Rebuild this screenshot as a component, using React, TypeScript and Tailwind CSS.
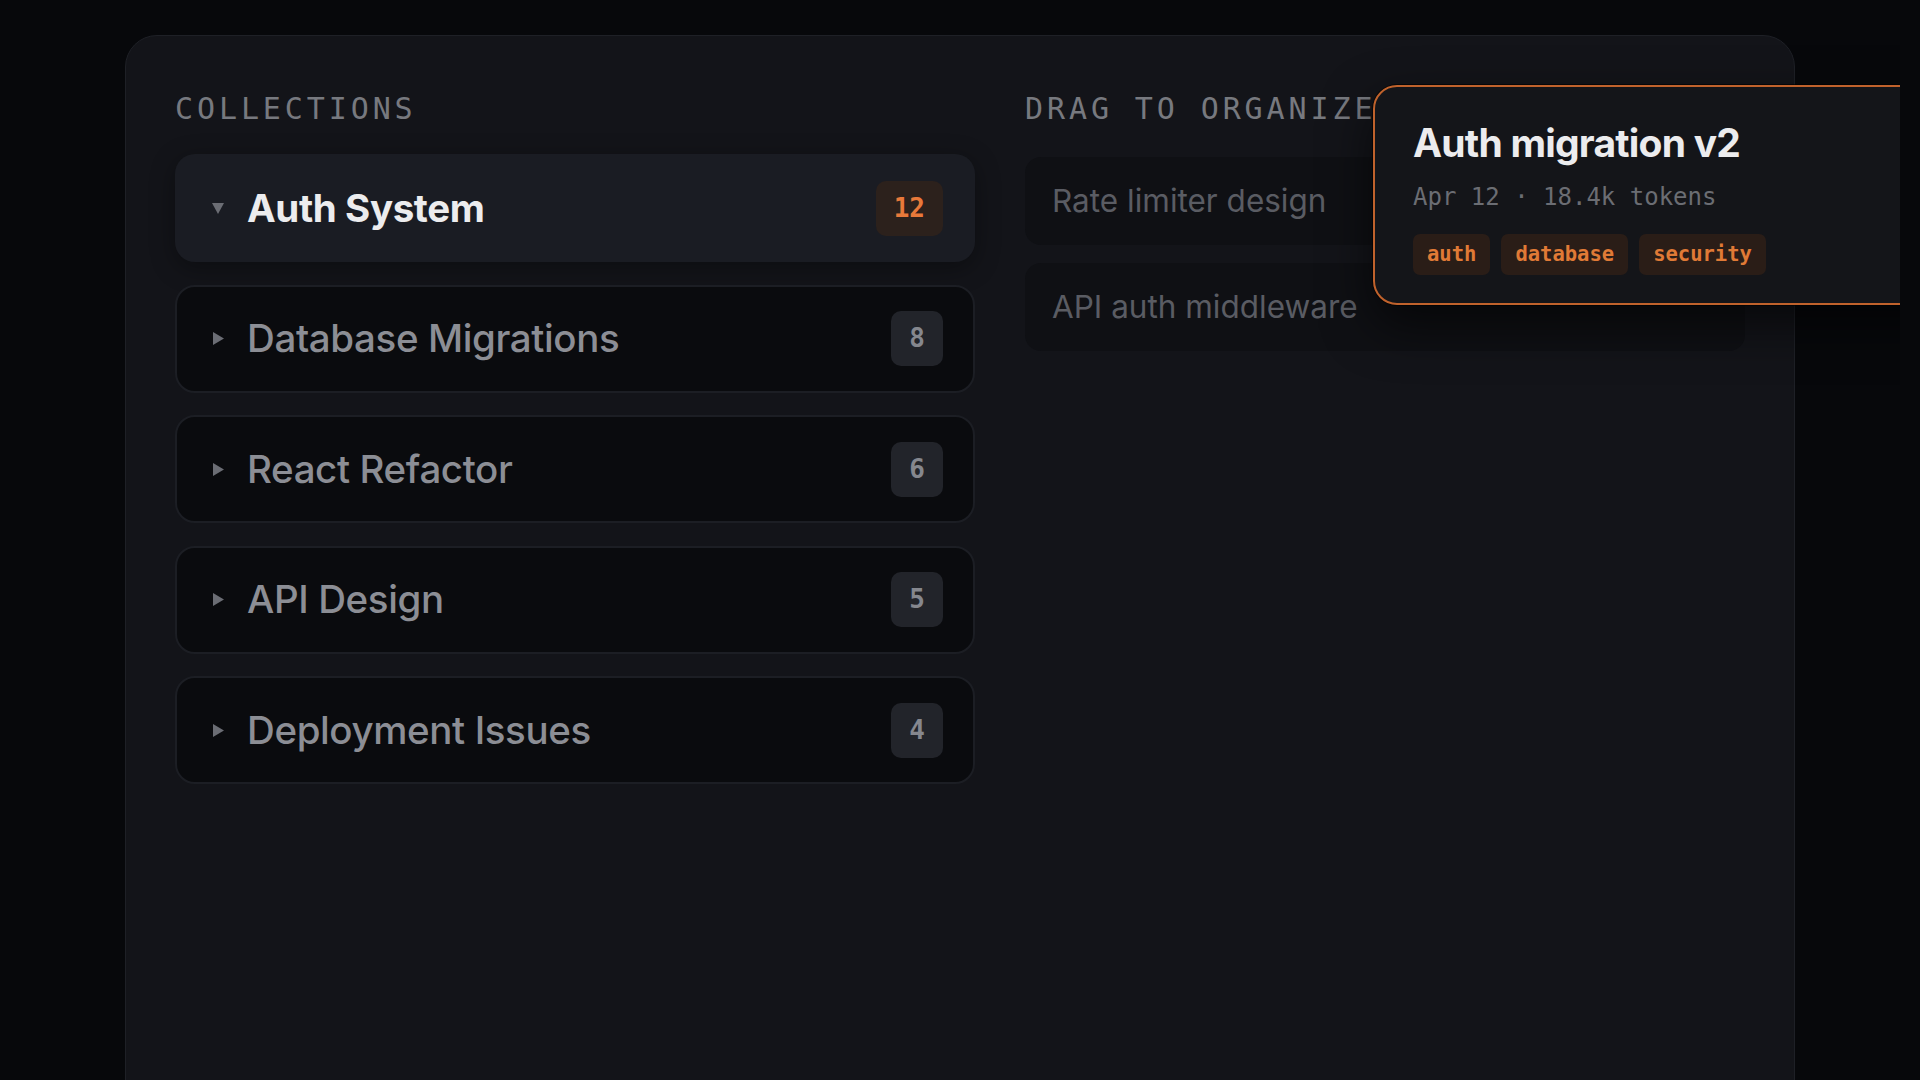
import React from 'react'

type Collection = {
  name: string
  count: number
  open?: boolean
}

const collections: Collection[] = [
  { name: 'Auth System', count: 12, open: true },
  { name: 'Database Migrations', count: 8 },
  { name: 'React Refactor', count: 6 },
  { name: 'API Design', count: 5 },
  { name: 'Deployment Issues', count: 4 },
]

const loose = ['Rate limiter design', 'API auth middleware']

const tags = ['auth', 'database', 'security']

const sans = { fontFamily: 'Inter, "Noto Sans", sans-serif' }
const mono = { fontFamily: '"DejaVu Sans Mono", "Liberation Mono", monospace' }

function Caret({ open }: { open?: boolean }) {
  if (open) {
    return (
      <svg width="12" height="13" viewBox="0 0 12 13" className="shrink-0">
        <polygon points="0,1 12,1 6,12" fill="#6b6d74" />
      </svg>
    )
  }
  return (
    <svg width="12" height="13" viewBox="0 0 12 13" className="shrink-0">
      <polygon points="1,0 12,6.5 1,13" fill="#6b6d74" />
    </svg>
  )
}

function CollectionRow({ item }: { item: Collection }) {
  return (
    <div
      className={`flex h-[108px] items-center rounded-[20px] border-2 pl-[35px] pr-[30px] ${
        item.open
          ? 'border-transparent bg-[#1a1c23] shadow-[0_6px_24px_rgba(0,0,0,0.35)]'
          : 'border-[#1c1e24] bg-[#0a0b0e]'
      }`}
    >
      <Caret open={item.open} />
      <span
        style={sans}
        className={`ml-[23px] text-[38.5px] leading-none tracking-[-0.01em] ${
          item.open ? 'font-bold text-[#ececee]' : 'font-medium text-[#8c8e95]'
        }`}
      >
        {item.name}
      </span>
      <span
        style={mono}
        className={`ml-auto flex h-[55px] min-w-[52px] items-center justify-center rounded-[10px] px-[18px] text-[26px] font-bold ${
          item.open ? 'bg-[#2c211c] text-[#e8793a]' : 'bg-[#22242a] text-[#85878e]'
        }`}
      >
        {item.count}
      </span>
    </div>
  )
}

export default function App() {
  return (
    <div className="h-[1080px] w-full overflow-hidden bg-[#07080b]">
      <div className="relative h-full w-[1900px] overflow-hidden pl-[125px] pt-[35px]">
        <div className="h-[1100px] w-[1670px] rounded-[32px] border border-[#1e2026] bg-[#131419] px-[49px] pt-[58px]">
          <div className="grid grid-cols-[800px_1fr] gap-[50px]">
            <div>
              <div
                style={mono}
                className="text-[30px] leading-[30px] tracking-[0.13em] text-[#77797f]"
              >
                COLLECTIONS
              </div>
              <div className="mt-[30px] flex flex-col gap-[22.5px]">
                {collections.map(c => (
                  <CollectionRow key={c.name} item={c} />
                ))}
              </div>
            </div>
            <div>
              <div
                style={mono}
                className="text-[30px] leading-[30px] tracking-[0.13em] text-[#77797f]"
              >
                DRAG TO ORGANIZE
              </div>
              <div className="mt-[33px] flex flex-col gap-[18px]">
                {loose.map(t => (
                  <div
                    key={t}
                    className="flex h-[88px] items-center rounded-[16px] bg-[#0f1014] pl-[27px]"
                  >
                    <span style={sans} className="text-[31.5px] text-[#5a5c63]">
                      {t}
                    </span>
                  </div>
                ))}
              </div>
            </div>
          </div>
        </div>

        {/* dragged conversation card */}
        <div className="absolute left-[1373px] top-[85px] w-[620px] rounded-[24px] border-2 border-[#c0622c] bg-[#141519] pb-[28px] pl-[38px] pt-[33px] shadow-[0_0_0_1px_rgba(0,0,0,0.6),0_20px_50px_rgba(0,0,0,0.6)]">
          <div style={sans} className="text-[39px] font-bold leading-[1.2] tracking-[-0.02em] text-[#ececee]">
            Auth migration v2
          </div>
          <div style={mono} className="mt-[15px] text-[24px] leading-[31px] text-[#6b6d73]">
            Apr 12 · 18.4k tokens
          </div>
          <div className="mt-[21px] flex gap-[11px]">
            {tags.map(t => (
              <span
                key={t}
                style={mono}
                className="flex h-[41px] items-center rounded-[7px] bg-[#2a1d17] px-[14px] text-[20.5px] font-bold text-[#e07a36]"
              >
                {t}
              </span>
            ))}
          </div>
        </div>
      </div>
    </div>
  )
}
